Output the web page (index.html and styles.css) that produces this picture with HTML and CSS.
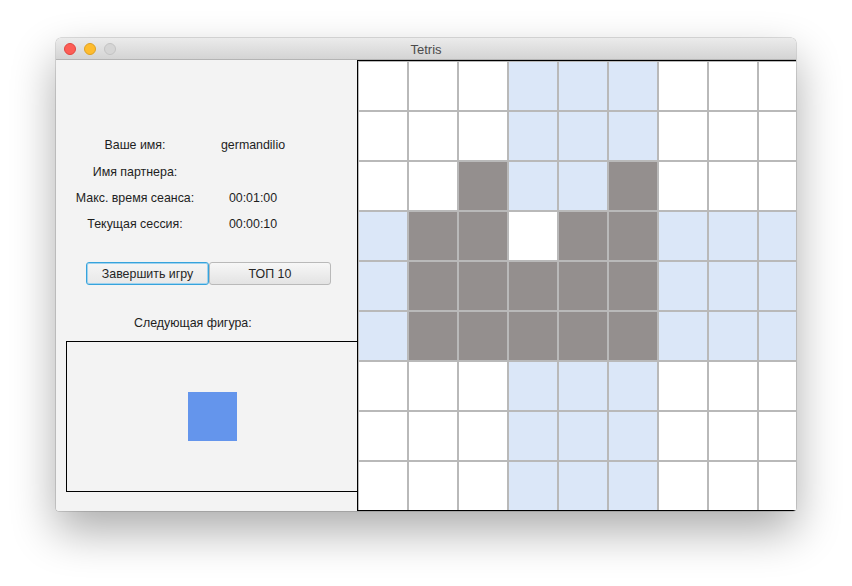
FILE: index.html
```html
<!DOCTYPE html>
<html lang="ru">
<head>
<meta charset="utf-8">
<title>Tetris</title>
<link rel="stylesheet" href="styles.css">
</head>
<body>
<div class="window">
  <div class="titlebar">
    <div class="lights">
      <span class="light red"></span>
      <span class="light yellow"></span>
      <span class="light gray"></span>
    </div>
    <div class="title">Tetris</div>
    <div></div>
  </div>
  <div class="content">
    <div class="panel">
      <div class="info">
        <div class="lbl">Ваше имя:</div><div class="val">germandilio</div>
        <div class="lbl">Имя партнера:</div><div class="val"></div>
        <div class="lbl">Макс. время сеанса:</div><div class="val">00:01:00</div>
        <div class="lbl">Текущая сессия:</div><div class="val">00:00:10</div>
      </div>
      <div class="buttons">
        <button class="btn focused">Завершить игру</button>
        <button class="btn">ТОП 10</button>
      </div>
      <div class="next-label">Следующая фигура:</div>
      <div class="next-box"><div class="piece"></div></div>
    </div>
    <div class="board">
      <div class="grid">
        <div class="c w"></div><div class="c w"></div><div class="c w"></div><div class="c b"></div><div class="c b"></div><div class="c b"></div><div class="c w"></div><div class="c w"></div><div class="c w"></div>
        <div class="c w"></div><div class="c w"></div><div class="c w"></div><div class="c b"></div><div class="c b"></div><div class="c b"></div><div class="c w"></div><div class="c w"></div><div class="c w"></div>
        <div class="c w"></div><div class="c w"></div><div class="c g"></div><div class="c b"></div><div class="c b"></div><div class="c g"></div><div class="c w"></div><div class="c w"></div><div class="c w"></div>
        <div class="c b"></div><div class="c g"></div><div class="c g"></div><div class="c w"></div><div class="c g"></div><div class="c g"></div><div class="c b"></div><div class="c b"></div><div class="c b"></div>
        <div class="c b"></div><div class="c g"></div><div class="c g"></div><div class="c g"></div><div class="c g"></div><div class="c g"></div><div class="c b"></div><div class="c b"></div><div class="c b"></div>
        <div class="c b"></div><div class="c g"></div><div class="c g"></div><div class="c g"></div><div class="c g"></div><div class="c g"></div><div class="c b"></div><div class="c b"></div><div class="c b"></div>
        <div class="c w"></div><div class="c w"></div><div class="c w"></div><div class="c b"></div><div class="c b"></div><div class="c b"></div><div class="c w"></div><div class="c w"></div><div class="c w"></div>
        <div class="c w"></div><div class="c w"></div><div class="c w"></div><div class="c b"></div><div class="c b"></div><div class="c b"></div><div class="c w"></div><div class="c w"></div><div class="c w"></div>
        <div class="c w"></div><div class="c w"></div><div class="c w"></div><div class="c b"></div><div class="c b"></div><div class="c b"></div><div class="c w"></div><div class="c w"></div><div class="c w"></div>
      </div>
    </div>
  </div>
</div>
</body>
</html>
```
FILE: styles.css
```css
* { box-sizing: border-box; }
html, body { margin: 0; padding: 0; background: #ffffff; }
body {
  width: 852px;
  height: 586px;
  overflow: hidden;
  font-family: "Liberation Sans", Arial, sans-serif;
  font-size: 12.4px;
  color: #1e1e1e;
  padding-top: 38px;
  padding-left: 56px;
}
.window {
  width: 740px;
  height: 473px;
  border-radius: 5px 5px 3px 3px;
  overflow: hidden;
  box-shadow: 0 20px 45px rgba(0,0,0,0.33), 0 0 0 0.5px rgba(0,0,0,0.25);
  background: #f3f3f3;
}
.titlebar {
  height: 22px;
  background: linear-gradient(#ebebeb, #d4d4d4);
  border-bottom: 1px solid #b4b4b4;
  display: grid;
  grid-template-columns: 1fr auto 1fr;
  align-items: center;
}
.lights {
  display: flex;
  gap: 8px;
  padding-left: 8px;
}
.light {
  width: 12px;
  height: 12px;
  border-radius: 50%;
  display: block;
}
.red { background: #fd5d56; border: 0.5px solid #e1453f; }
.yellow { background: #febc2e; border: 0.5px solid #dda124; }
.gray { background: #d5d5d5; border: 1px solid #c3c3c3; }
.title {
  color: #4b4b4b;
  font-size: 13px;
  line-height: 16px;
  padding-top: 2px;
}
.content {
  display: flex;
  height: 451px;
}
.panel {
  width: 301px;
  flex: none;
  background: #f3f3f3;
  padding-top: 71px;
}
.info {
  display: grid;
  grid-template-columns: 138px 98px;
  grid-template-rows: 27px 27px 26px 26px;
  margin-left: 10px;
  align-items: center;
}
.lbl, .val { text-align: center; line-height: 16px; }
.buttons {
  display: flex;
  margin-top: 25px;
  margin-left: 30px;
}
.btn {
  font-family: "Liberation Sans", Arial, sans-serif;
  font-size: 12.4px;
  color: #262626;
  height: 23px;
  padding: 0;
  border-radius: 3px;
  background: linear-gradient(#f7f7f7, #e3e3e3);
  border: 1px solid #b9b9b9;
  width: 122px;
}
.btn.focused {
  width: 123px;
  border: 1px solid #36a3dc;
  box-shadow: inset 0 0 0 1px #9fd2ee;
  background: linear-gradient(#f5f5f5, #e8e8e8);
}
.next-label {
  margin-top: 30px;
  padding-left: 78px;
  line-height: 16px;
}
.next-box {
  margin-top: 10px;
  margin-left: 10px;
  height: 151px;
  border: 1px solid #000;
  border-right: none;
  display: flex;
  align-items: center;
  justify-content: center;
}
.piece {
  width: 49px;
  height: 49px;
  background: #6495ec;
}
.board {
  flex: 1;
  height: 451px;
  border-left: 1px solid #000;
  border-top: 1px solid #000;
  border-bottom: 1px solid #000;
  overflow: hidden;
  background: #fff;
}
.grid {
  display: grid;
  grid-template-columns: repeat(9, 50px);
  grid-template-rows: repeat(9, 50px);
}
.c { border: 1px solid #b9b9b9; }
.w { background: #ffffff; }
.b { background: #dbe7f8; }
.g { background: #948f8e; }
```
